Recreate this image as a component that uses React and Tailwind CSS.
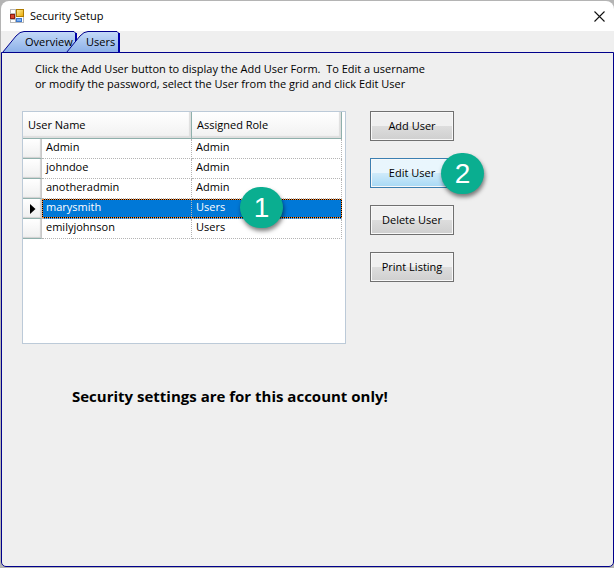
import { useState } from "react";

const USERS = [
  { name: "Admin", role: "Admin" },
  { name: "johndoe", role: "Admin" },
  { name: "anotheradmin", role: "Admin" },
  { name: "marysmith", role: "Users" },
  { name: "emilyjohnson", role: "Users" },
];

const ACTIONS = ["Add User", "Edit User", "Delete User", "Print Listing"];

const FormIcon = () => (
  <svg width="14" height="14" viewBox="0 0 14 14" aria-hidden="true">
    <defs>
      <linearGradient id="gold" x1="0" y1="0" x2="1" y2="1">
        <stop offset="0" stopColor="#fff0a0" />
        <stop offset="1" stopColor="#e8a800" />
      </linearGradient>
    </defs>
    <rect x="0.5" y="0.5" width="13" height="13" fill="#ffffff" stroke="#b8b8b8" />
    <path d="M0 4.5H6M0 10.5H6M5.5 0V14" stroke="#b8b8b8" fill="none" />
    <rect x="6.5" y="0.5" width="7" height="7" fill="url(#gold)" stroke="#b07c00" />
    <rect x="0.5" y="5.5" width="4" height="4" fill="#d8442c" stroke="#8c1c10" />
    <rect x="6.5" y="9.5" width="5" height="3" fill="#7cb0f4" stroke="#3c78cc" />
  </svg>
);

// Slanted tab: the outline is drawn behind the label
const Tab = ({ label, width, className, onClick, selected }) => (
  <button
    type="button"
    role="tab"
    aria-selected={selected}
    onClick={onClick}
    className={`relative h-[22px] ${className}`}
  >
    <svg
      className="absolute inset-0"
      width={width}
      height="22"
      viewBox={`0 0 ${width} 22`}
      aria-hidden="true"
    >
      <defs>
        <linearGradient id={`fill-${label}`} x1="0" y1="0" x2="0" y2="1">
          <stop offset="0" stopColor="#c4daf8" />
          <stop offset="1" stopColor="#8cb0e8" />
        </linearGradient>
      </defs>
      <path
        d={`M0.5 21.5L14 5Q18 0.5 22 0.5H${width - 3}L${width - 1} 2.5V21.5Z`}
        fill={`url(#fill-${label})`}
        stroke="#00008b"
      />
      <path d={`M${width - 1} 2V22`} stroke="#0000a8" strokeWidth="2" />
    </svg>
    <span className="relative">{label}</span>
  </button>
);

const Badge = ({ children, className }) => (
  <span
    className={`absolute z-10 flex h-[41px] w-[43px] items-center justify-center rounded-full bg-[#0aae90] font-['Liberation_Sans',sans-serif] text-[28px] leading-none text-white shadow-[1px_3px_4px_rgba(0,0,0,0.5)] ${className}`}
  >
    {children}
  </span>
);

const headCell =
  "h-[27px] border-r border-b border-[#8fb0ac] bg-linear-to-b from-white to-[#f1f1f1] px-[5px] text-left font-normal shadow-[inset_-2px_-2px_1px_#dedede]";

const UserGrid = ({ selected, onSelect }) => (
  <div className="h-[233px] w-[324px] border border-[#bccad8] bg-white">
    <table className="w-[319px] table-fixed border-separate border-spacing-0">
      <colgroup>
        <col className="w-[19px]" />
        <col className="w-[150px]" />
        <col className="w-[150px]" />
      </colgroup>
      <thead>
        <tr>
          <th colSpan={2} className={headCell}>
            User Name
          </th>
          <th className={headCell}>Assigned Role</th>
        </tr>
      </thead>
      <tbody>
        {USERS.map((user, i) => {
          const active = i === selected;
          const cell = `h-5 border-r border-b border-dotted border-[#b4b4b4] p-0 pl-1 align-top leading-4 ${
            active ? "bg-[#0078d7] text-white" : ""
          }`;
          return (
            <tr key={user.name} className="relative" onClick={() => onSelect(i)}>
              <td className="h-5 border-r border-b border-r-[#c8c8c8] border-b-[#8fb0ac] bg-linear-to-b from-white to-[#efefef] p-0 shadow-[inset_-1px_-1px_1px_#d0d0d0]">
                {active && (
                  <svg className="ml-[7px]" width="6" height="10" viewBox="0 0 6 10">
                    <path d="M0 0L5.5 5L0 10Z" fill="#000" />
                  </svg>
                )}
              </td>
              <td className={cell}>
                {user.name}
                {active && (
                  <span className="absolute top-0 right-0 bottom-px left-[19px] border border-black outline-1 -outline-offset-1 outline-[#ff8728] outline-dotted" />
                )}
              </td>
              <td className={cell}>
                {user.role}
                {user.name === "marysmith" && (
                  <Badge className="-top-3 left-[217px]">1</Badge>
                )}
              </td>
            </tr>
          );
        })}
      </tbody>
    </table>
  </div>
);

const ActionButton = ({ label }) => {
  const colors =
    label === "Edit User"
      ? "border-[#3c7fb1] from-[#e9f6fd] from-50% via-[#d0ebfa] via-50% to-[#a7d9f5]"
      : "border-[#707070] from-[#f0f0f0] from-50% via-[#dddddd] via-50% to-[#cfcfcf]";
  return (
    <button
      type="button"
      className={`h-[30px] w-full border bg-linear-to-b shadow-[inset_0_0_0_1px_#f8f8f8] ${colors}`}
    >
      {label}
    </button>
  );
};

const App = () => {
  const [selected, setSelected] = useState(3);
  const [tab, setTab] = useState("Users");

  return (
    <div className="flex min-h-screen flex-col bg-[#b4b4b4] pt-px pb-px pl-px font-['Open_Sans','Noto_Sans',sans-serif] text-[11px] text-black">
      <header className="flex h-[30px] items-center rounded-t-lg bg-white pr-[9px] pl-[9px]">
        <FormIcon />
        <h1 className="ml-[6px] flex-1">Security Setup</h1>
        <button type="button" aria-label="Close">
          <svg width="11" height="11" viewBox="0 0 11 11">
            <path d="M0.5 0.5L10.5 10.5M10.5 0.5L0.5 10.5" stroke="#111" strokeWidth="1.1" />
          </svg>
        </button>
      </header>

      <div role="tablist" className="flex h-[21px] bg-[#efefef] pl-px">
        <Tab
          label="Overview"
          width={75}
          className="w-[75px] pl-[23px] text-left"
          selected={tab === "Overview"}
          onClick={() => setTab("Overview")}
        />
        <Tab
          label="Users"
          width={54}
          className="-ml-[11px] w-[54px] pl-5 text-left"
          selected={tab === "Users"}
          onClick={() => setTab("Users")}
        />
      </div>

      <main className="flex-1 rounded-b-[5px] border border-[#00008b] bg-[#efefef] pt-2 pl-5">
        <p className="ml-[13px] leading-[15px] whitespace-pre">
          Click the Add User button to display the Add User Form.{"  "}To Edit a username
          <br />
          or modify the password, select the User from the grid and click Edit User
        </p>

        <div className="mt-5 flex gap-6">
          <UserGrid selected={selected} onSelect={setSelected} />
          <div className="flex w-[84px] flex-col gap-[17px]">
            {ACTIONS.map((label) => (
              <div key={label} className="relative">
                <ActionButton label={label} />
                {label === "Edit User" && <Badge className="-top-[5px] left-[71px]">2</Badge>}
              </div>
            ))}
          </div>
        </div>

        <p className="mt-10 ml-[50px] text-[15px] leading-6 font-bold">
          Security settings are for this account only!
        </p>
      </main>
    </div>
  );
};

export default App;
